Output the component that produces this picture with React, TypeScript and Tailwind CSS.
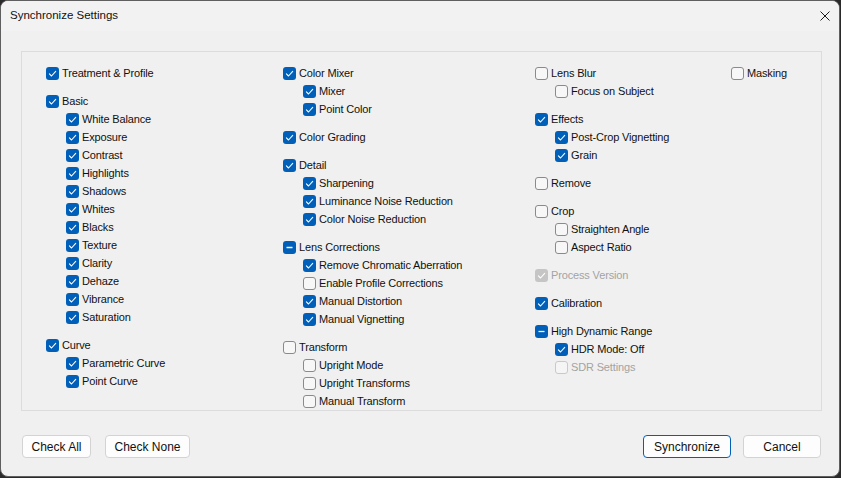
import React from "react";

type St = "on" | "off" | "mixed";

function Box({ st, disabled }: { st: St; disabled?: boolean }) {
  if (st === "off") {
    return (
      <span
        className={
          "block w-[13px] h-[13px] rounded-[3px] border shrink-0 " +
          (disabled ? "border-[#c9c9c9] bg-[#f5f5f5]" : "border-[#8a8a8a] bg-[#f7f7f7]")
        }
      />
    );
  }
  return (
    <span
      className={
        "flex items-center justify-center w-[13px] h-[13px] rounded-[3px] shrink-0 " +
        (disabled ? "bg-[#c5c5c5]" : "bg-[#005fb8]")
      }
    >
      {st === "on" ? (
        <svg width="13" height="13" viewBox="0 0 13 13">
          <path d="M3.4 6.9 L5.5 9 L9.7 4.3" fill="none" stroke="#ffffff" strokeWidth="1.1" strokeLinecap="round" strokeLinejoin="round" />
        </svg>
      ) : (
        <svg width="13" height="13" viewBox="0 0 13 13">
          <path d="M3.5 6.5 H9.5" fill="none" stroke="#ffffff" strokeWidth="1.3" />
        </svg>
      )}
    </span>
  );
}

function Row({ label, st, disabled, child }: { label: string; st: St; disabled?: boolean; child?: boolean }) {
  return (
    <div className={"flex items-center h-[18px] gap-[3px] " + (child ? "pl-[20px]" : "")}>
      <Box st={st} disabled={disabled} />
      <span
        className={
          "text-[11px] tracking-[-0.15px] leading-none whitespace-nowrap " +
          (disabled ? "text-[#a3a3a3]" : "text-[#111111]")
        }
      >
        {label}
      </span>
    </div>
  );
}

type G = { label: string; st: St; disabled?: boolean; kids?: { label: string; st: St; disabled?: boolean }[] };

function Group({ g }: { g: G }) {
  return (
    <div className="flex flex-col">
      <Row label={g.label} st={g.st} disabled={g.disabled} />
      {g.kids?.map((k) => (
        <Row key={k.label} label={k.label} st={k.st} disabled={k.disabled} child />
      ))}
    </div>
  );
}

function Column({ groups, w }: { groups: G[]; w: string }) {
  return (
    <div className={"flex flex-col gap-[10px] " + w}>
      {groups.map((g) => (
        <Group key={g.label} g={g} />
      ))}
    </div>
  );
}

const col1: G[] = [
  { label: "Treatment & Profile", st: "on" },
  {
    label: "Basic",
    st: "on",
    kids: [
      "White Balance",
      "Exposure",
      "Contrast",
      "Highlights",
      "Shadows",
      "Whites",
      "Blacks",
      "Texture",
      "Clarity",
      "Dehaze",
      "Vibrance",
      "Saturation",
    ].map((l) => ({ label: l, st: "on" as St })),
  },
  {
    label: "Curve",
    st: "on",
    kids: [
      { label: "Parametric Curve", st: "on" },
      { label: "Point Curve", st: "on" },
    ],
  },
];

const col2: G[] = [
  {
    label: "Color Mixer",
    st: "on",
    kids: [
      { label: "Mixer", st: "on" },
      { label: "Point Color", st: "on" },
    ],
  },
  { label: "Color Grading", st: "on" },
  {
    label: "Detail",
    st: "on",
    kids: [
      { label: "Sharpening", st: "on" },
      { label: "Luminance Noise Reduction", st: "on" },
      { label: "Color Noise Reduction", st: "on" },
    ],
  },
  {
    label: "Lens Corrections",
    st: "mixed",
    kids: [
      { label: "Remove Chromatic Aberration", st: "on" },
      { label: "Enable Profile Corrections", st: "off" },
      { label: "Manual Distortion", st: "on" },
      { label: "Manual Vignetting", st: "on" },
    ],
  },
  {
    label: "Transform",
    st: "off",
    kids: [
      { label: "Upright Mode", st: "off" },
      { label: "Upright Transforms", st: "off" },
      { label: "Manual Transform", st: "off" },
    ],
  },
];

const col3: G[] = [
  { label: "Lens Blur", st: "off", kids: [{ label: "Focus on Subject", st: "off" }] },
  {
    label: "Effects",
    st: "on",
    kids: [
      { label: "Post-Crop Vignetting", st: "on" },
      { label: "Grain", st: "on" },
    ],
  },
  { label: "Remove", st: "off" },
  {
    label: "Crop",
    st: "off",
    kids: [
      { label: "Straighten Angle", st: "off" },
      { label: "Aspect Ratio", st: "off" },
    ],
  },
  { label: "Process Version", st: "on", disabled: true },
  { label: "Calibration", st: "on" },
  {
    label: "High Dynamic Range",
    st: "mixed",
    kids: [
      { label: "HDR Mode: Off", st: "on" },
      { label: "SDR Settings", st: "off", disabled: true },
    ],
  },
];

const col4: G[] = [{ label: "Masking", st: "off" }];

function Btn({ children, w, primary }: { children: React.ReactNode; w: string; primary?: boolean }) {
  return (
    <div
      className={
        "flex items-center justify-center h-[23px] rounded-[4px] border bg-[#fdfdfd] text-[12px] text-[#111111] " +
        w +
        (primary ? " border-[#005fb8]" : " border-[#d3d3d3]")
      }
    >
      {children}
    </div>
  );
}

export default function App() {
  return (
    <div className="w-[841px] h-[478px] bg-[#2a2a2a]" style={{ fontFamily: '"Liberation Sans", Arial, sans-serif' }}>
      <div className="w-[840px] h-[477px] rounded-[8px] border border-[#5f5f5f] bg-[#f0f0f0] overflow-hidden flex flex-col">
        <div className="h-[30px] bg-[#f3f2f3] flex items-center justify-between pl-[9px] pr-[9px] shrink-0">
          <span className="text-[11.5px] text-[#111111]">Synchronize Settings</span>
          <svg width="10" height="10" viewBox="0 0 10 10" className="mt-[-1px]">
            <path d="M0.5 0.5 L9.5 9.5 M9.5 0.5 L0.5 9.5" stroke="#1a1a1a" strokeWidth="1" />
          </svg>
        </div>
        <div className="pl-[20px] pt-[20px]">
          <div className="w-[801px] h-[360px] border border-[#dcdcdc] pl-[24px] pt-[12px] flex">
            <Column groups={col1} w="w-[237px]" />
            <Column groups={col2} w="w-[252px]" />
            <Column groups={col3} w="w-[196px]" />
            <Column groups={col4} w="w-[80px]" />
          </div>
        </div>
        <div className="flex pl-[21px] pr-[18px] mt-[24px]">
          <div className="flex gap-[14px]">
            <Btn w="w-[69px]">Check All</Btn>
            <Btn w="w-[85px]">Check None</Btn>
          </div>
          <div className="flex gap-[12px] ml-auto">
            <Btn w="w-[88px]" primary>
              Synchronize
            </Btn>
            <Btn w="w-[78px]">Cancel</Btn>
          </div>
        </div>
      </div>
    </div>
  );
}
